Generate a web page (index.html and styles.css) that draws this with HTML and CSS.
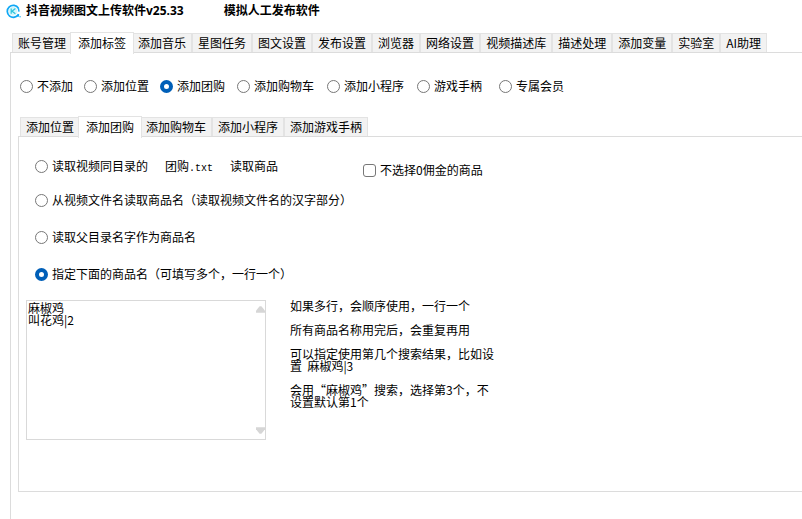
FILE: index.html
```html
<!DOCTYPE html>
<html lang="zh-CN">
  <head>
    <meta charset="UTF-8" />
    <title>抖音视频图文上传软件v25.33</title>
    <link rel="stylesheet" href="styles.css">
  </head>
  <body>
    <header class="titlebar">
      <svg class="logo" viewBox="0 0 15 15" aria-hidden="true">
        <path d="M12.6 10.2A6 6 0 1 1 12.4 4.2" fill="none" stroke="#10a8f5" stroke-width="1.8" />
        <circle cx="7" cy="7.2" r="4.4" fill="#d5f6fb" />
        <path d="M5.2 4.6v5.2M9.4 4.6L6 7.2l3.4 2.6" fill="none" stroke="#2cc4dc" stroke-width="1.2" />
        <path d="M12.4 4.2l.6 3.4" stroke="#10a8f5" stroke-width="1.4" />
        <path d="M9.6 12.2l3.4-2 .2 2.6z" fill="#10a8f5" />
        <rect x="13.4" y="12" width="1.4" height="1.4" fill="#4cc3f7" />
      </svg>
      <h1 class="title">抖音视频图文上传软件v25.33</h1>
      <span class="title">模拟人工发布软件</span>
    </header>

    <main class="window">
      <nav class="tabs">
        <button class="tab">账号管理</button>
        <button class="tab active">添加标签</button>
        <button class="tab">添加音乐</button>
        <button class="tab">星图任务</button>
        <button class="tab">图文设置</button>
        <button class="tab">发布设置</button>
        <button class="tab">浏览器</button>
        <button class="tab">网络设置</button>
        <button class="tab">视频描述库</button>
        <button class="tab">描述处理</button>
        <button class="tab">添加变量</button>
        <button class="tab">实验室</button>
        <button class="tab">AI助理</button>
      </nav>

      <section class="panel outer">
        <div class="kinds">
          <label class="option"><input type="radio" name="kind">不添加</label>
          <label class="option"><input type="radio" name="kind">添加位置</label>
          <label class="option"><input type="radio" name="kind" checked>添加团购</label>
          <label class="option"><input type="radio" name="kind">添加购物车</label>
          <label class="option"><input type="radio" name="kind">添加小程序</label>
          <label class="option"><input type="radio" name="kind">游戏手柄</label>
          <label class="option"><input type="radio" name="kind">专属会员</label>
        </div>

        <nav class="tabs">
          <button class="tab">添加位置</button>
          <button class="tab active">添加团购</button>
          <button class="tab">添加购物车</button>
          <button class="tab">添加小程序</button>
          <button class="tab">添加游戏手柄</button>
        </nav>

        <section class="panel inner">
          <div class="sources">
            <div class="source-row">
              <label class="option first">
                <input type="radio" name="source">
                <span class="parts">
                  <span>读取视频同目录的</span>
                  <span>团购<span class="ascii">.txt</span></span>
                  <span>读取商品</span>
                </span>
              </label>
              <label class="option"><input type="checkbox">不选择0佣金的商品</label>
            </div>
            <label class="option"><input type="radio" name="source">从视频文件名读取商品名（读取视频文件名的汉字部分）</label>
            <label class="option"><input type="radio" name="source">读取父目录名字作为商品名</label>
            <label class="option"><input type="radio" name="source" checked>指定下面的商品名（可填写多个，一行一个）</label>
          </div>

          <div class="names">
            <div class="names-box">
              <textarea class="names-input" aria-label="商品名">麻椒鸡
叫花鸡|2</textarea>
              <svg class="arrow up" viewBox="0 0 10 7" aria-hidden="true"><path d="M4 0h2l4 5v2H0V5z" /></svg>
              <svg class="arrow down" viewBox="0 0 10 7" aria-hidden="true"><path d="M4 7h2l4-5V0H0v2z" /></svg>
            </div>
            <div class="help">
              <p>如果多行，会顺序使用，一行一个</p>
              <p>所有商品名称用完后，会重复再用</p>
              <p>可以指定使用第几个搜索结果，比如设置&nbsp; 麻椒鸡|3</p>
              <p>会用“麻椒鸡”搜索，选择第3个，不设置默认第1个</p>
            </div>
          </div>
        </section>
      </section>
    </main>
  </body>
</html>
```

FILE: styles.css
```css
* {
  box-sizing: border-box;
}

body {
  display: flex;
  flex-direction: column;
  height: 100vh;
  margin: 0;
  overflow: hidden;
  background: #fff;
  color: #000;
  font-family: "Noto Sans CJK SC", sans-serif;
  font-size: 12px;
  line-height: 16px;
}

button,
textarea {
  font: inherit;
  color: inherit;
}

/* half-width letters, 6px each */
.ascii {
  font-family: "Liberation Mono", monospace;
  font-size: 10px;
  line-height: 1;
}

.titlebar {
  display: flex;
  align-items: center;
  height: 22px;
  padding: 0 6px;
}

.logo {
  width: 15px;
  height: 15px;
  margin-right: 5px;
}

.title {
  margin: 0 40px 0 0;
  font-family: "Open Sans", "Noto Sans CJK SC", sans-serif;
  font-size: 12px;
  font-weight: bold;
}

.window {
  flex: 1;
  display: flex;
  flex-direction: column;
  padding: 10px 0 0 10px;
}

.tabs {
  display: flex;
  align-items: flex-end;
  height: 21px;
  padding-left: 2px;
  margin-bottom: -1px;
  white-space: nowrap;
}

.tab {
  height: 19px;
  margin-bottom: 1px;
  padding: 0 5px;
  border: 1px solid #e3e3e3;
  border-bottom: 0;
  background: #f2f2f2;
  line-height: 18px;
}

.tab.active {
  z-index: 1;
  height: 22px;
  margin: 0 -2px -1px;
  padding: 0 7px 2px;
  background: #fff;
}

.panel {
  border: 1px solid #dcdcdc;
  border-right: 0;
}

.outer {
  flex: 1;
  border-bottom: 0;
  padding: 25px 0 0 7px;
}

.option {
  display: flex;
  align-items: center;
  gap: 4px;
  white-space: nowrap;
}

.option input {
  appearance: none;
  flex: none;
  width: 13px;
  height: 13px;
  margin: 0;
  border: 1px solid #777;
  border-radius: 50%;
  background: #fff;
}

.option input[type="checkbox"] {
  border-radius: 3px;
}

.option input:checked {
  border: 4px solid #005fb8;
}

.kinds {
  display: grid;
  grid-template-columns: 64px 76px 77px 90px 90px 82px auto;
  padding-left: 2px;
  margin-bottom: 22px;
}

.inner {
  padding: 21px 0 51px 7px;
}

.sources {
  display: flex;
  flex-direction: column;
  align-items: flex-start;
  gap: 21px;
  padding-left: 9px;
  margin-bottom: 18px;
}

.source-row {
  display: flex;
  align-items: flex-end;
  height: 20px;
  margin-bottom: -7px;
}

.first {
  width: 328px;
  height: 16px;
  align-self: flex-start;
}

.parts {
  display: flex;
  gap: 17px;
}

.names {
  display: flex;
  gap: 24px;
}

.names-box {
  position: relative;
  width: 240px;
  height: 140px;
}

.names-input {
  display: block;
  width: 100%;
  height: 100%;
  padding: 1px;
  border: 1px solid #d9d9d9;
  outline: 0;
  resize: none;
  overflow: hidden;
  line-height: 12px;
}

.arrow {
  position: absolute;
  right: 1px;
  width: 9px;
  height: 7px;
  fill: #d6d6d6;
}

.up {
  top: 6px;
}

.down {
  bottom: 6px;
}

.help {
  width: 208px;
  line-height: 12px;
}

.help p {
  margin: 0 0 12px;
}
```
